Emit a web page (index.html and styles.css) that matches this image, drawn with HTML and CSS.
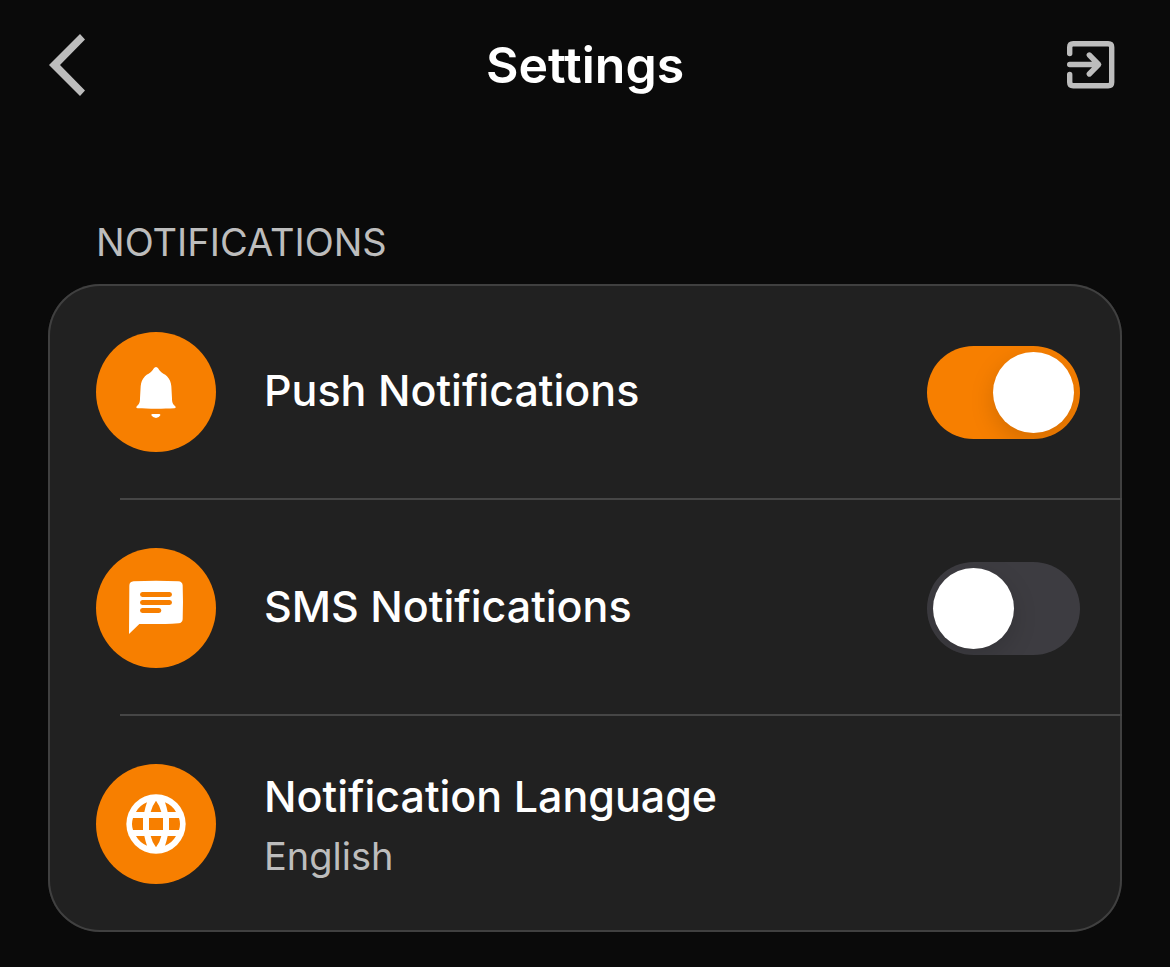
FILE: index.html
```html
<!DOCTYPE html>
<html lang="en">
<head>
<meta charset="utf-8">
<meta name="viewport" content="width=device-width, initial-scale=1">
<title>Settings</title>
<link rel="stylesheet" href="styles.css">
</head>
<body>
<header class="topbar">
  <button class="icon-button" type="button" aria-label="Back">
    <svg class="back-icon" viewBox="0 0 36 62" aria-hidden="true"><path d="M0 31 31 0l5 5.500L11 31l25 25.500-5 5.500z"/></svg>
  </button>
  <h1 class="title">Settings</h1>
  <button class="icon-button icon-button-end" type="button" aria-label="Log out">
    <svg class="exit-icon" viewBox="0 0 48 48" aria-hidden="true"><path d="M2.700 12.600V6.200q0-3.500 3.500-3.500h35q3.500 0 3.500 3.500v35q0 3.500-3.500 3.500h-35q-3.500 0-3.500-3.500v-7.700M2.700 23.500h28M22.300 14l9.300 9.500-9.300 9.500"/></svg>
  </button>
</header>
<main class="content">
  <h2 class="section-title">NOTIFICATIONS</h2>
  <ul class="card">
    <li class="item">
      <label class="row">
        <svg class="badge" viewBox="18 18 360 360" aria-hidden="true">
          <circle class="disc" cx="198" cy="198" r="180"/>
          <path d="M198 123c6 0 8 8 13 13 4 5 14 9 20 15 8 8 12 18 13 30l2 36c0 12 2 17 9 23 3 3 3 6-2 7-30 2-80 2-110 0-5-1-5-4-2-7 7-6 9-11 9-23l2-36c1-12 5-22 13-30 6-6 16-10 20-15 5-5 7-13 13-13zM188 264h19q5 0 4 4-4 8-13 8t-14-8q-1-4 4-4z"/>
        </svg>
        <span class="label">Push Notifications</span>
        <input class="switch" type="checkbox" role="switch" checked>
      </label>
    </li>
    <li class="item">
      <label class="row">
        <svg class="badge" viewBox="18 18 360 360" aria-hidden="true">
          <circle class="disc" cx="198" cy="198" r="180"/>
          <path d="M117 276l1-145q0-12 13-13 67-3 134 0 12 1 13 12 2 51 0 102-1 11-12 12-20 2-40 2h-78z"/>
          <path class="cut" d="M157 150h82q7 1 7 7.500t-7 7.500h-82q-7-1-7-7.500t7-7.500zM157 174h82q7 1 7 7.500t-7 7.500h-82q-7-1-7-7.500t7-7.500zM157 198h50q7 1 7 7.500t-7 7.500h-50q-7-1-7-7.500t7-7.500z"/>
        </svg>
        <span class="label">SMS Notifications</span>
        <input class="switch" type="checkbox" role="switch">
      </label>
    </li>
    <li class="item">
      <button class="row" type="button">
        <svg class="badge" viewBox="18 18 360 360" aria-hidden="true">
          <circle class="disc" cx="198" cy="198" r="180"/>
          <circle cx="198" cy="198" r="89"/>
          <path class="cut" d="M177 180h42v36h-42zM129 180h30v36h-30q-6-18 0-36zM267 180h-30v36h30q6-18 0-36zM198 128q12 16 16 34h-32q4-18 16-34zM198 268q12-16 16-34h-32q4 18 16 34zM138 162q11-20 33-29-5 14-8 29zM258 162q-11-20-33-29 5 14 8 29zM138 234q11 20 33 29-5-14-8-29zM258 234q-11 20-33 29 5-14 8-29z"/>
        </svg>
        <span class="label label-stacked">Notification Language<span class="value">English</span></span>
      </button>
    </li>
  </ul>
</main>
</body>
</html>
```
FILE: styles.css
```css
* {
  box-sizing: border-box;
}

body {
  margin: 0;
  background: #0a0a0a;
  color: #fff;
  font-family: Inter, "Liberation Sans", sans-serif;
}

button {
  padding: 0;
  border: 0;
  background: none;
  color: inherit;
  font: inherit;
  text-align: left;
  cursor: pointer;
}

svg {
  display: block;
}

.topbar {
  display: grid;
  grid-template-columns: 1fr auto 1fr;
  align-items: center;
  height: 130px;
  padding: 0 49px;
}

.icon-button {
  justify-self: start;
}

.icon-button-end {
  justify-self: end;
  margin-right: 6px;
}

.back-icon {
  width: 36px;
  height: 62px;
  fill: #bdbdbd;
}

.exit-icon {
  width: 48px;
  height: 48px;
  fill: none;
  stroke: #bdbdbd;
  stroke-width: 5.4;
  stroke-linecap: round;
  stroke-linejoin: round;
}

.title {
  margin: 0;
  font-size: 50px;
  font-weight: 600;
  line-height: 60px;
}

.content {
  padding: 86px 48px 35px;
}

.section-title {
  margin: 0 0 16px;
  padding: 0 48px;
  color: #bdbdbd;
  font-size: 38px;
  font-weight: 400;
  line-height: 52px;
}

.card {
  margin: 0;
  padding: 0;
  border-radius: 52px;
  background: #212121;
  box-shadow: inset 0 0 0 2px #404040;
  list-style: none;
}

/* Separator starts inside the badge column and runs to the card edge */
.item:not(:last-child)::after {
  content: "";
  display: block;
  height: 2px;
  margin: -2px 0 0 72px;
  background: #464646;
}

.row {
  display: flex;
  align-items: center;
  gap: 48px;
  width: 100%;
  min-height: 216px;
  padding: 24px 42px 24px 48px;
}

.badge {
  flex: none;
  width: 120px;
  height: 120px;
  fill: #fff;
}

.disc,
.cut {
  fill: #f77f00;
}

.label {
  flex: 1;
  padding-bottom: 4px;
  font-size: 43px;
  font-weight: 500;
  line-height: 60px;
}

.label-stacked {
  padding: 4px 0 0;
}

.value {
  display: block;
  color: #bdbdbd;
  font-size: 38px;
  font-weight: 400;
}

.switch {
  appearance: none;
  flex: none;
  width: 153px;
  height: 93px;
  margin: 0;
  padding: 6px;
  border-radius: 47px;
  background: #3d3c41;
  overflow: hidden;
  cursor: pointer;
}

.switch::before {
  content: "";
  display: block;
  width: 81px;
  height: 81px;
  border-radius: 50%;
  background: #fff;
  box-shadow: 0 8px 24px rgba(0, 0, 0, 0.15);
}

.switch:checked {
  background: #f77f00;
}

.switch:checked::before {
  margin-left: auto;
}
```
